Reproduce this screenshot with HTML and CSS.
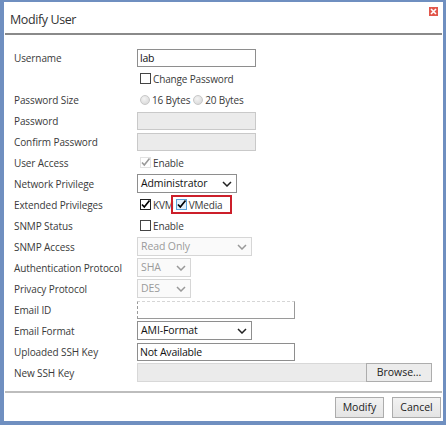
FILE: index.html
```html
<!DOCTYPE html>
<html>
<head>
<meta charset="utf-8">
<link rel="stylesheet" href="styles.css">
</head>
<body>
<div class="dialog">
  <div class="header">
    <span class="title">Modify User</span>
    <span class="close"><svg width="9" height="9" viewBox="0 0 9 9"><path d="M2 2L7 7M7 2L2 7" stroke="#fff" stroke-width="1.6"/></svg></span>
  </div>
  <div class="form">
    <div class="row"><span class="label">Username</span><div class="ctl"><span class="input w118">lab</span></div></div>
    <div class="row"><span class="label"></span><div class="ctl"><span class="cb"></span><span class="cbt">Change Password</span></div></div>
    <div class="row"><span class="label">Password Size</span><div class="ctl"><span class="radio"></span><span class="rt">16 Bytes</span><span class="radio"></span><span class="rt">20 Bytes</span></div></div>
    <div class="row"><span class="label">Password</span><div class="ctl"><span class="input w118 dis"></span></div></div>
    <div class="row"><span class="label">Confirm Password</span><div class="ctl"><span class="input w118 dis"></span></div></div>
    <div class="row"><span class="label">User Access</span><div class="ctl"><span class="cb dischk"><svg width="11" height="11" viewBox="0 0 11 11"><path d="M2 5.5L4.3 8L9.5 1.5" fill="none" stroke="#9a9a9a" stroke-width="1.6"/></svg></span><span class="cbt">Enable</span></div></div>
    <div class="row"><span class="label">Network Privilege</span><div class="ctl"><span class="select w99">Administrator<svg class="chev" width="10" height="6" viewBox="0 0 10 6"><path d="M1 1L5 5L9 1" fill="none" stroke="#222" stroke-width="1.5"/></svg></span></div></div>
    <div class="row"><span class="label">Extended Privileges</span><div class="ctl"><span class="cb chk"><svg width="11" height="11" viewBox="0 0 11 11"><path d="M2 5.5L4.3 8L9.5 1.5" fill="none" stroke="#000" stroke-width="1.7"/></svg></span><span class="cbt kvm">KVM</span><span class="hl"><span class="cb chk focus"><svg width="11" height="11" viewBox="0 0 11 11"><path d="M2 5.5L4.3 8L9.5 1.5" fill="none" stroke="#000" stroke-width="1.7"/></svg></span><span class="cbt">VMedia</span></span></div></div>
    <div class="row"><span class="label">SNMP Status</span><div class="ctl"><span class="cb"></span><span class="cbt">Enable</span></div></div>
    <div class="row"><span class="label">SNMP Access</span><div class="ctl"><span class="select w114 dsel">Read Only<svg class="chev" width="10" height="6" viewBox="0 0 10 6"><path d="M1 1L5 5L9 1" fill="none" stroke="#999" stroke-width="1.5"/></svg></span></div></div>
    <div class="row"><span class="label">Authentication Protocol</span><div class="ctl"><span class="select w53 dsel">SHA<svg class="chev" width="10" height="6" viewBox="0 0 10 6"><path d="M1 1L5 5L9 1" fill="none" stroke="#999" stroke-width="1.5"/></svg></span></div></div>
    <div class="row"><span class="label">Privacy Protocol</span><div class="ctl"><span class="select w53 dsel">DES<svg class="chev" width="10" height="6" viewBox="0 0 10 6"><path d="M1 1L5 5L9 1" fill="none" stroke="#999" stroke-width="1.5"/></svg></span></div></div>
    <div class="row"><span class="label">Email ID</span><div class="ctl"><span class="input w157 dashed"></span></div></div>
    <div class="row"><span class="label">Email Format</span><div class="ctl"><span class="select w114">AMI-Format<svg class="chev" width="10" height="6" viewBox="0 0 10 6"><path d="M1 1L5 5L9 1" fill="none" stroke="#222" stroke-width="1.5"/></svg></span></div></div>
    <div class="row"><span class="label">Uploaded SSH Key</span><div class="ctl"><span class="input w157">Not Available</span></div></div>
    <div class="row"><span class="label">New SSH Key</span><div class="ctl"><span class="file"><span class="filefield"></span><span class="browse">Browse...</span></span></div></div>
  </div>
  <div class="footer">
    <span class="btn">Modify</span>
    <span class="btn">Cancel</span>
  </div>
</div>
</body>
</html>
```
FILE: styles.css
```css
html, body { margin: 0; padding: 0; background: #fff; }
body { font-family: "Open Sans", "Noto Sans", sans-serif; color: #333; }
.dialog {
  width: 446px; height: 425px; box-sizing: border-box;
  border-style: solid; border-color: #6f8fc0;
  border-width: 2px 3px 4px 4px;
  background: #fff;
  display: flex; flex-direction: column;
  position: relative;
}
.header {
  height: 31px; margin: 0 1px 0 1px;
  border-bottom: 2px solid #8a8a8a;
  display: flex; align-items: center;
  padding-left: 5px;
}
.title { font-size: 12.5px; letter-spacing: -0.4px; color: #333; padding-top: 3px; }
.close {
  position: absolute; right: 5px; top: 5px;
  width: 9px; height: 9px; background: #e2574c;
  display: flex;
}
.form { padding: 12px 0 0 10px; display: flex; flex-direction: column; flex: 1; }
.row { height: 21px; display: flex; align-items: center; }
.label { width: 123px; font-size: 10px; letter-spacing: -0.1px; color: #3a3a3a; }
.ctl { display: flex; align-items: center; font-size: 10px; color: #3a3a3a; }
.input {
  height: 18px; box-sizing: border-box; border: 1px solid #8e8e8e;
  font-size: 10.5px; letter-spacing: -0.2px; color: #111; padding: 0 2px; line-height: 16px; background: #fff;
}
.input.dis { background: #ebebeb; border-color: #c9c9c9; }
.input.dashed { border-style: dashed solid solid dashed; border-color: #d6d6d6 #9a9a9a #9a9a9a #9a9a9a; }
.w118 { width: 119px; }
.w157 { width: 158px; }
.w99 { width: 100px; }
.w114 { width: 115px; }
.w53 { width: 54px; }
.cb {
  width: 11px; height: 11px; box-sizing: border-box; border: 1px solid #444;
  background: #fff; margin-left: 3px; display: flex; flex-shrink: 0;
}
.cb svg { margin: -1px; }
.cb.dischk { border-color: #e2e2e2; }
.cb.chk { border-color: #222; }
.cb.focus { border-color: #5aa0d8; background: #e2f0fb; }
.cbt { margin-left: 2px; font-size: 10px; letter-spacing: -0.15px; color: #3a3a3a; white-space: nowrap; }
.cbt.kvm { margin-left: 2px; }
.hl {
  display: flex; align-items: center; height: 19px; box-sizing: border-box;
  border: 2px solid #cc1f2a; padding-right: 7px;
  margin-left: -3px;
}
.hl .cb { margin-left: 3px; }
.radio {
  width: 10px; height: 10px; border-radius: 50%; box-sizing: border-box;
  border: 1px solid #c8c8c8; background: radial-gradient(circle at 40% 35%, #f4f4f4, #d4d4d4);
  margin-left: 3px;
}
.radio + .rt { margin-left: 2px; }
.rt { font-size: 10px; letter-spacing: -0.15px; color: #3a3a3a; }
.select {
  height: 19px; box-sizing: border-box; border: 1px solid #8e8e8e;
  font-size: 10.5px; letter-spacing: -0.1px; color: #111; padding: 0 4px 0 3px; line-height: 17px;
  display: flex; align-items: center; justify-content: space-between; background: #fff;
}
.select.dsel { border-color: #d6d6d6; color: #9a9a9a; background: #fafafa; }
.file { display: flex; height: 19px; width: 295px; }
.filefield { flex: 1; background: #ebebeb; border: 1px solid #d8d8d8; border-right: 0; }
.browse {
  width: 66px; box-sizing: border-box; border: 1px solid #adadad;
  background: #ececec; font-size: 10.5px; color: #222; text-align: center; line-height: 17px;
}
.footer {
  height: 28px; margin: 0 1px 0 1px; border-top: 2px solid #bdbdbd;
  display: flex; justify-content: flex-end; align-items: center; gap: 8px;
  padding-right: 1px;
}
.btn {
  height: 21px; width: 49px; box-sizing: border-box; border: 1px solid #acacac;
  background: linear-gradient(#f2f2f2, #e4e4e4);
  font-size: 10.5px; color: #222; text-align: center; line-height: 19px;
}
```
